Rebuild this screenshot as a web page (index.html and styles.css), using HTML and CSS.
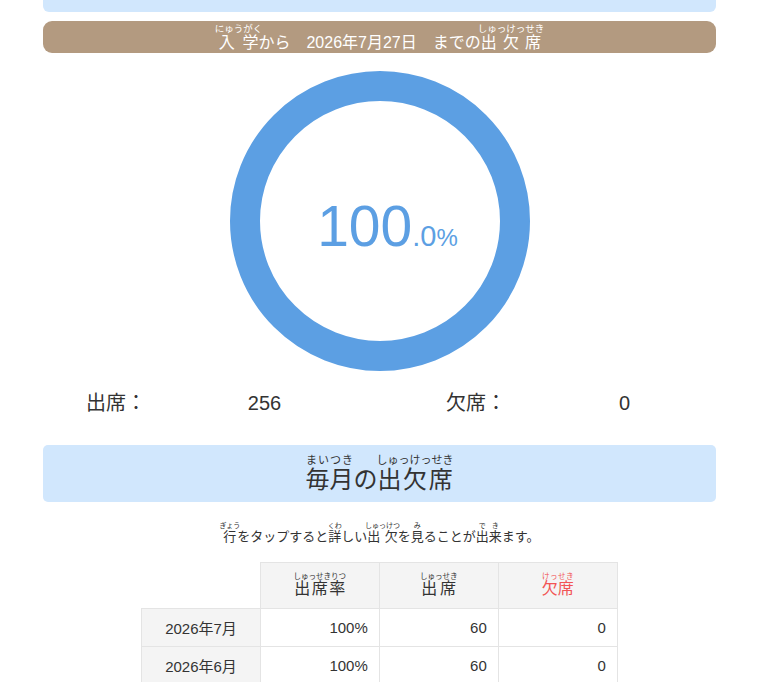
FILE: index.html
```html
<!DOCTYPE html>
<html lang="ja">
<head>
    <meta charset="UTF-8">
    <meta name="viewport" content="width=device-width, initial-scale=1.0">
    <link rel="stylesheet" href="styles.css">
</head>
<body>

    <div class="page">
        <div class="prev-card"></div>

        <div class="period-bar">
            <span><ruby>入学<rt>にゅうがく</rt></ruby>から　2026年7月27日　までの<ruby>出欠席<rt>しゅっけっせき</rt></ruby></span>
        </div>

        <div class="ring-wrap">
            <div class="ring">
                <div class="rate"><span class="rate-int">100</span><span class="rate-dec">.0</span><span class="rate-pct">%</span></div>
            </div>
        </div>

        <div class="stats">
            <div class="stat">
                <span class="stat-label">出席：</span>
                <span class="stat-value">256</span>
            </div>
            <div class="stat">
                <span class="stat-label">欠席：</span>
                <span class="stat-value">0</span>
            </div>
        </div>

        <div class="section-head">
            <h2><ruby>毎月<rt>まいつき</rt></ruby>の<ruby>出欠席<rt>しゅっけっせき</rt></ruby></h2>
        </div>

        <p class="note"><ruby>行<rt>ぎょう</rt></ruby>をタップすると<ruby>詳<rt>くわ</rt></ruby>しい<ruby>出欠<rt>しゅっけつ</rt></ruby>を<ruby>見<rt>み</rt></ruby>ることが<ruby>出来<rt>でき</rt></ruby>ます。</p>

        <table class="monthly">
            <thead>
                <tr>
                    <th class="blank"></th>
                    <th><ruby>出席率<rt>しゅっせきりつ</rt></ruby></th>
                    <th><ruby>出席<rt>しゅっせき</rt></ruby></th>
                    <th class="absent"><ruby>欠席<rt>けっせき</rt></ruby></th>
                </tr>
            </thead>
            <tbody>
                <tr>
                    <td class="month">2026年7月</td>
                    <td>100%</td>
                    <td>60</td>
                    <td>0</td>
                </tr>
                <tr>
                    <td class="month">2026年6月</td>
                    <td>100%</td>
                    <td>60</td>
                    <td>0</td>
                </tr>
            </tbody>
        </table>
    </div>

</body>
</html>
```

FILE: styles.css
```css
body {
    font-family: "Liberation Sans", "Noto Sans CJK JP", sans-serif;
    color: #333;
    background-color: #fff;
    margin: 0;
}
.page {
    width: 673px;
    margin: 0 0 0 43px;
}
.prev-card {
    height: 12px;
    background-color: #d1e7fd;
    border-radius: 0 0 6px 6px;
}
.period-bar {
    margin-top: 9px;
    height: 32px;
    background-color: #b39a80;
    border-radius: 9px;
    color: #fff;
    font-size: 16px;
    display: flex;
    justify-content: center;
    align-items: center;
    line-height: 1;
}
.period-bar rt {
    font-size: 9.5px;
}
.ring-wrap {
    display: flex;
    justify-content: center;
    margin-top: 18px;
}
.ring {
    width: 300px;
    height: 300px;
    box-sizing: border-box;
    border: 30px solid #5c9fe3;
    border-radius: 50%;
    display: flex;
    justify-content: center;
    align-items: center;
}
.rate {
    color: #5c9fe3;
    line-height: 1;
    margin-left: 16px;
    margin-top: 10px;
}
.rate-int {
    font-size: 57px;
}
.rate-dec {
    font-size: 29px;
}
.rate-pct {
    font-size: 24px;
}
.stats {
    display: grid;
    grid-template-columns: 360px 237px;
    margin: 17px 0 0 43px;
    font-size: 20px;
    line-height: 30px;
}
.stat {
    display: grid;
    grid-template-columns: 120px 117px;
}
.stat-value {
    text-align: center;
}
.section-head {
    margin-top: 27px;
    height: 57px;
    background-color: #d1e7fd;
    border-radius: 5px;
    display: flex;
    justify-content: center;
    align-items: center;
}
.section-head h2 {
    margin: 0;
    font-size: 24px;
    font-weight: normal;
    line-height: 1.1;
}
.section-head rt {
    font-size: 11px;
}
.note {
    margin: 20px 0 0;
    text-align: center;
    font-size: 13px;
    line-height: 1.2;
}
.note rt {
    font-size: 7px;
}
.monthly {
    margin: 17px auto 0;
    border-collapse: collapse;
    font-size: 15px;
}
.monthly th {
    width: 118px;
    height: 45px;
    background-color: #f4f4f4;
    border: 1px solid #e4e4e4;
    font-size: 16px;
    font-weight: normal;
    line-height: 1.15;
    padding: 0;
}
.monthly th rt {
    font-size: 7.5px;
}
.monthly th.blank {
    background: none;
    border: none;
    border-bottom: 1px solid #e4e4e4;
}
.monthly th.absent {
    color: #f25555;
}
.monthly td {
    height: 37px;
    border: 1px solid #e4e4e4;
    text-align: right;
    padding: 0 11px;
}
.monthly td.month {
    background-color: #f4f4f4;
    text-align: center;
}
```
